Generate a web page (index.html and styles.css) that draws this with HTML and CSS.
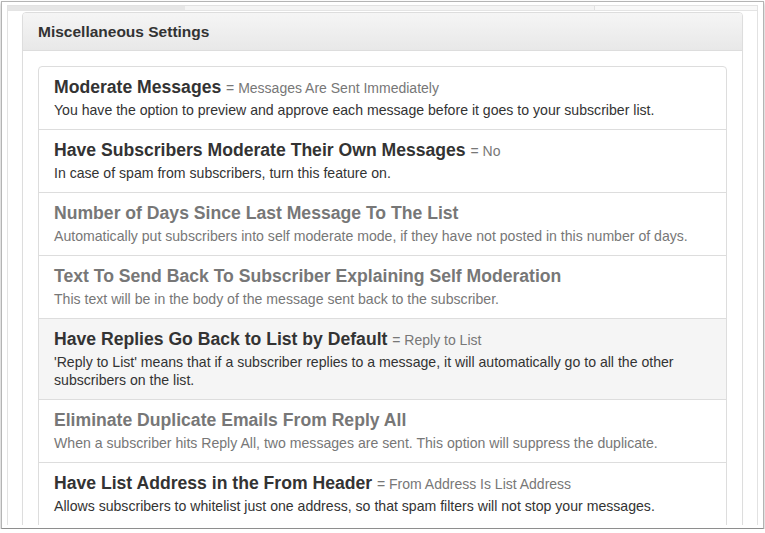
FILE: index.html
```html
<!DOCTYPE html>
<html lang="en">
<head>
<meta charset="utf-8">
<title>Miscellaneous Settings</title>
<link rel="stylesheet" href="styles.css">
</head>
<body>
<div class="window">
  <div class="viewport">
    <div class="page">
      <div class="tabstrip">
        <span class="tab tab-a"></span>
        <span class="tab tab-b"></span>
        <span class="tab tab-c"></span>
      </div>
      <div class="panel">
        <div class="panel-heading">
          <h3 class="panel-title">Miscellaneous Settings</h3>
        </div>
        <div class="panel-body">
          <div class="list-group">
            <div class="list-group-item">
              <h4 class="item-heading">Moderate Messages <span class="item-value">= Messages Are Sent Immediately</span></h4>
              <p class="item-text">You have the option to preview and approve each message before it goes to your subscriber list.</p>
            </div>
            <div class="list-group-item">
              <h4 class="item-heading">Have Subscribers Moderate Their Own Messages <span class="item-value">= No</span></h4>
              <p class="item-text">In case of spam from subscribers, turn this feature on.</p>
            </div>
            <div class="list-group-item disabled">
              <h4 class="item-heading">Number of Days Since Last Message To The List</h4>
              <p class="item-text">Automatically put subscribers into self moderate mode, if they have not posted in this number of days.</p>
            </div>
            <div class="list-group-item disabled">
              <h4 class="item-heading">Text To Send Back To Subscriber Explaining Self Moderation</h4>
              <p class="item-text">This text will be in the body of the message sent back to the subscriber.</p>
            </div>
            <div class="list-group-item active-row">
              <h4 class="item-heading">Have Replies Go Back to List by Default <span class="item-value">= Reply to List</span></h4>
              <p class="item-text">'Reply to List' means that if a subscriber replies to a message, it will automatically go to all the other subscribers on the list.</p>
            </div>
            <div class="list-group-item disabled">
              <h4 class="item-heading">Eliminate Duplicate Emails From Reply All</h4>
              <p class="item-text">When a subscriber hits Reply All, two messages are sent. This option will suppress the duplicate.</p>
            </div>
            <div class="list-group-item">
              <h4 class="item-heading">Have List Address in the From Header <span class="item-value">= From Address Is List Address</span></h4>
              <p class="item-text">Allows subscribers to whitelist just one address, so that spam filters will not stop your messages.</p>
            </div>
          </div>
        </div>
      </div>
    </div>
  </div>
</div>
</body>
</html>
```
FILE: styles.css
```css
html, body {
  margin: 0;
  padding: 0;
  background: #ffffff;
}

body {
  font-family: "Liberation Sans", Arial, sans-serif;
  color: #333333;
}

.window {
  box-sizing: border-box;
  width: 763px;
  height: 528px;
  margin: 1px 0 0 1px;
  padding: 3px 5px;
  border: 1px solid #b4b4b4;
  border-bottom-color: #8e8e8e;
  background: #ffffff;
  box-shadow: 0 2px 3px rgba(0, 0, 0, 0.3);
}

.viewport {
  height: 520px;
  overflow: hidden;
}

.page {
  border: 1px solid #e2e2e2;
  border-bottom: none;
  padding: 0 14px 20px;
  min-height: 600px;
}

.tabstrip {
  display: flex;
  height: 4px;
  margin: 0 -14px;
  border-bottom: 1px solid #e4e4e4;
}

.tab {
  display: block;
}

.tab-a {
  width: 177px;
  background: #e6e6e6;
}

.tab-b {
  width: 409px;
  background: #f4f4f4;
  border-right: 1px solid #e0e0e0;
}

.tab-c {
  flex: 1;
  background: #f8f8f8;
}

.panel {
  margin-top: 1px;
  border: 1px solid #dddddd;
  border-radius: 4px;
  background: #ffffff;
  box-shadow: 0 1px 1px rgba(0, 0, 0, 0.05);
}

.panel-heading {
  padding: 10px 15px;
  border-bottom: 1px solid #dddddd;
  border-radius: 3px 3px 0 0;
  background: linear-gradient(to bottom, #f5f5f5 0%, #e8e8e8 100%);
}

.panel-title {
  margin: 0;
  font-size: 15.5px;
  line-height: 17px;
  font-weight: bold;
  color: #333333;
}

.panel-body {
  padding: 15px;
}

.list-group {
  display: flex;
  flex-direction: column;
}

.list-group-item {
  padding: 10px 15px;
  border: 1px solid #dddddd;
  margin-bottom: -1px;
  background: #ffffff;
}

.list-group-item:first-child {
  border-radius: 4px 4px 0 0;
}

.list-group-item.active-row {
  background: #f5f5f5;
}

.item-heading {
  margin: 0 0 4px;
  height: 20px;
  font-size: 17.6px;
  line-height: 20px;
  font-weight: bold;
  color: #333333;
}

.item-value {
  font-size: 14px;
  line-height: 14px;
  font-weight: normal;
  color: #777777;
}

.item-text {
  margin: 0;
  font-size: 14.1px;
  line-height: 18px;
  color: #333333;
}

.disabled .item-heading,
.disabled .item-text {
  color: #777777;
}
```
